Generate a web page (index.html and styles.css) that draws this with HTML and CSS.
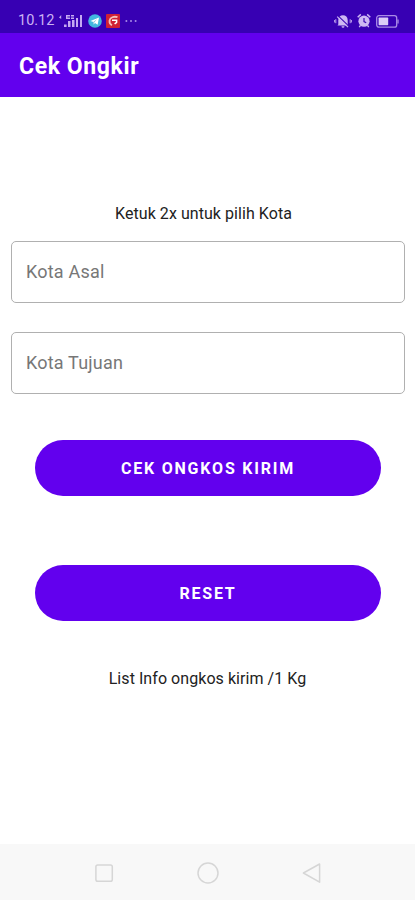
FILE: index.html
```html
<!DOCTYPE html>
<html lang="id">
<head>
<meta charset="utf-8">
<title>Cek Ongkir</title>
<link rel="stylesheet" href="styles.css">
</head>
<body>
<div class="screen">
  <div class="status">
    <span class="time">10.12</span>
    <svg class="signal" width="24" height="14" viewBox="0 0 24 14" fill="#c5a9f2">
      <path d="M0 3.5 2.2 1v4M4 1.3h2M4 3.3h2M7 1h4v1.4H8.4v1.2H11V5H7zM12 1h3v1.4h-3zM12 3.6h3V5h-3z"/>
      <path d="M5 10.5h2.6V13H5zM9 7h2.5v6H9zM13 6h2.5v7H13zM17 4h2v9h-2zM21 1h2v12h-2z"/>
    </svg>
    <svg class="telegram" width="14" height="14" viewBox="0 0 14 14">
      <circle cx="7" cy="7" r="6.8" fill="#42b7df"/>
      <path d="M2.5 7 11 3.4 9.6 10.8 7 8.9 5.6 10.4 5.4 8z" fill="#fff"/>
      <path d="m5.4 8 3.8-2.9L6.2 8.4l-.6 2z" fill="#7fb7d6"/>
    </svg>
    <svg class="news" width="14" height="14" viewBox="0 0 14 14">
      <rect width="14" height="14" rx="1" fill="#d02035"/>
      <path d="M11.5 3.2C8 2 4 3.5 3.6 6.5c-.4 2.5.8 4 2.4 4.7" fill="none" stroke="#f6c0ba" stroke-width="1.8"/>
      <path d="M6 6.2h4.6v2.2L8.6 10" fill="none" stroke="#fff" stroke-width="1.5"/>
    </svg>
    <svg class="more" width="12" height="4" viewBox="0 0 12 4" fill="#a88be8">
      <circle cx="1.4" cy="2" r="1"/><circle cx="6" cy="2" r="1"/><circle cx="10.6" cy="2" r="1"/>
    </svg>
    <svg class="mute" width="18" height="16" viewBox="0 0 18 16">
      <path d="M4.3 11.5V7.2C4.3 4 6.4 2.3 9 2.3s4.7 1.7 4.7 4.9v4.3l.8 1h-11zM7.5 13.2h3A1.5 1.5 0 0 1 7.5 13.2z" fill="#cdb8f3"/>
      <path d="M1.8 6.2v4M.4 7v2.5M16.2 6.2v4M17.6 7v2.5" stroke="#bda0ee" stroke-width="1"/>
      <path d="m4.6 3.4 10.4 10" stroke="#3700b3" stroke-width="1.2"/>
      <path d="m3.2 3.6 10.8 10.5" stroke="#cdb8f3" stroke-width="1.2"/>
    </svg>
    <svg class="alarm" width="14" height="16" viewBox="0 0 14 16">
      <path d="M.7 4.2 3.8 1.4M13.3 4.2l-3.1-2.8" stroke="#cdb8f3" stroke-width="1.5"/>
      <circle cx="7" cy="8.2" r="5.6" fill="#cdb8f3"/>
      <path d="M7 5v3.6l2.2 1.2" fill="none" stroke="#3d0bb5" stroke-width="1.2"/>
      <path d="m3.4 12.5-1.2 1.6M10.6 12.5l1.2 1.6" stroke="#cdb8f3" stroke-width="1.3"/>
    </svg>
    <svg class="battery" width="23" height="13" viewBox="0 0 23 13">
      <rect x=".7" y=".7" width="20" height="11.4" rx="2.2" fill="none" stroke="#a98be6" stroke-width="1.3"/>
      <rect x="2.6" y="2.6" width="9.6" height="7.6" rx=".6" fill="#dccdf7"/>
      <path d="M22 4.5v4" stroke="#a98be6" stroke-width="1.3"/>
    </svg>
  </div>
  <header class="appbar"><h1>Cek Ongkir</h1></header>
  <main>
    <p class="hint">Ketuk 2x untuk pilih Kota</p>
    <div class="field">Kota Asal</div>
    <div class="field">Kota Tujuan</div>
    <button class="check">CEK ONGKOS KIRIM</button>
    <button class="reset">RESET</button>
    <p class="info">List Info ongkos kirim /1 Kg</p>
  </main>
  <nav>
    <svg width="22" height="22" viewBox="0 0 22 22"><rect x="2.9" y="2.9" width="16.4" height="16.4" rx="1.8"/></svg>
    <svg width="22" height="22" viewBox="0 0 22 22"><circle cx="11" cy="11" r="10"/></svg>
    <svg width="22" height="22" viewBox="0 0 22 22"><path d="M18.6 2v18.2L2.4 11z"/></svg>
  </nav>
</div>
</body>
</html>
```
FILE: styles.css
```css
* { box-sizing: border-box; }
body { margin: 0; font-family: Roboto, "Liberation Sans", sans-serif; background: #fff; }
.screen { width: 415px; height: 900px; display: flex; flex-direction: column; overflow: hidden; }
.status { height: 33px; flex: none; display: flex; align-items: center; padding: 9px 16px 0 18px; background: #3700b3; }
.time { width: 41px; font-size: 14.5px; line-height: 18px; letter-spacing: 0; color: #cbb2f4; white-space: nowrap; }
.telegram { margin-left: 5px; }
.news { margin-left: 4px; }
.more { margin-left: 5px; }
.mute { margin-left: auto; }
.alarm { margin-left: 5px; }
.battery { margin-left: 5px; }
.appbar { height: 64px; flex: none; display: flex; align-items: center; padding: 4px 19px 0; background: #6200ee; }
h1 { margin: 0; font-size: 23px; line-height: 28px; font-weight: 700; letter-spacing: .6px; color: #fff; white-space: nowrap; }
main { flex: 1; display: flex; flex-direction: column; align-items: center; }
p { margin: 0; font-size: 16px; line-height: 20px; letter-spacing: .06px; color: #222; white-space: nowrap; }
.hint { margin: 107px 8px 17px 0; }
.field { width: 394px; height: 62px; flex: none; margin: 0 0 29px 1px; padding: 0 14px 1px; border: 1.5px solid #b0b0b0; border-radius: 5px; display: flex; align-items: center; font-size: 18px; letter-spacing: .2px; color: #777; }
button { width: 346px; height: 56px; flex: none; margin: 0; padding: 2px 0 0; border: 0; border-radius: 28px; background: #6200ee; color: #fff; font: 700 16px/20px Roboto, "Liberation Sans", sans-serif; letter-spacing: 1.8px; }
.check { margin: 17px 0 69px 1px; }
.reset { margin: 0 0 48px 1px; }
nav { height: 56px; flex: none; display: flex; justify-content: center; align-items: center; gap: 82px; padding-top: 1px; background: #f8f8f8; }
nav svg { fill: none; stroke: #d6d6d6; stroke-width: 1.5; stroke-linejoin: round; }
```
